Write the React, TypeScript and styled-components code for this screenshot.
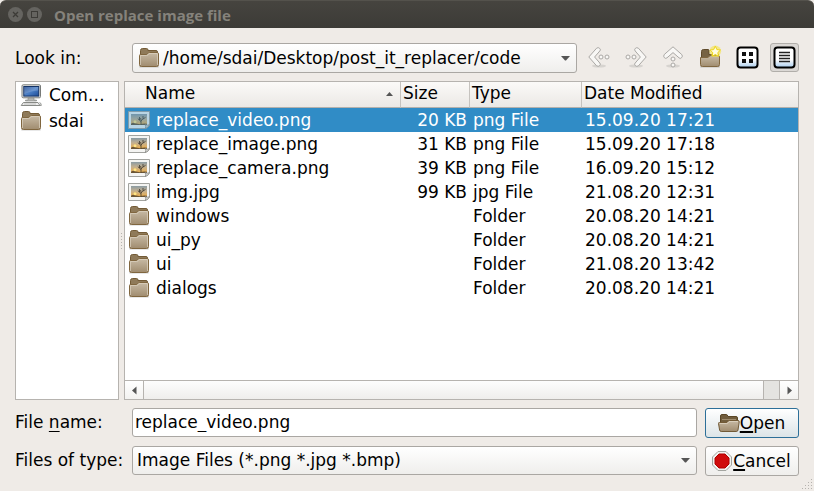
import React, { useState } from "react";
import styled, { createGlobalStyle } from "styled-components";

const GlobalStyle = createGlobalStyle`
  *, *::before, *::after { box-sizing: border-box; }
  body {
    margin: 0;
    background: #efebe7;
    color: #000;
    font: 17px/24px "DejaVu Sans", sans-serif;
  }
  button, input, select { font: inherit; color: inherit; margin: 0; }
`;

const line = "#b6b3af";

const Window = styled.div`
  display: flex;
  flex-direction: column;
  min-height: 100vh;
  background: #efebe7;
`;

const TitleBar = styled.header`
  display: flex;
  align-items: center;
  gap: 4px;
  height: 28px;
  padding-left: 8px;
  background: linear-gradient(#46443f, #3c3b37);
  border-top: 1px solid #54524c;
  border-radius: 6px 6px 0 0;
`;

const WindowButton = styled.button`
  display: flex;
  width: 15px;
  height: 15px;
  padding: 0;
  border: 0;
  border-radius: 50%;
  background: #656460;
`;

const Title = styled.h1`
  margin: 0 0 0 8px;
  color: #85827b;
  font: bold 15px/24px "Open Sans", sans-serif;
`;

const Dialog = styled.form`
  flex: 1;
  display: flex;
  flex-direction: column;
  gap: 8px;
  padding: 15px;
`;

const Row = styled.div`
  display: flex;
  gap: 8px;
  height: 30px;
`;

const Label = styled.label<{ $compact?: boolean }>`
  width: 109px;
  flex: none;
  line-height: ${(p) => (p.$compact ? 28 : 30)}px;
  white-space: nowrap;
`;

const Mnemonic = styled.span<{ $thick?: boolean }>`
  text-decoration: underline;
  text-decoration-thickness: ${(p) => (p.$thick ? 2 : 1)}px;
  text-underline-offset: ${(p) => (p.$thick ? 2 : 3)}px;
  text-decoration-skip-ink: none;
`;

const Combo = styled.div<{ $compact?: boolean }>`
  flex: 1;
  min-width: 0;
  height: ${(p) => (p.$compact ? 29 : 30)}px;
  display: grid;
  grid-template-columns: 30px 1fr 21px;
  align-items: center;
  border: 1px solid #aaa7a3;
  border-radius: 3px;
  background: linear-gradient(#fff, #efeeec);
`;

const Select = styled.select<{ $inset: number }>`
  grid-area: 1 / 1 / 2 / 4;
  align-self: start;
  width: 100%;
  height: ${(p) => (p.$inset > 10 ? 28 : 26)}px;
  padding: 0 22px 0 ${(p) => p.$inset}px;
  appearance: none;
  border: 0;
  background: transparent;
`;

const ComboIcon = styled.span`
  grid-area: 1 / 1;
  display: flex;
  padding-left: 5px;
  pointer-events: none;
`;

const ComboArrow = styled.span`
  grid-area: 1 / 3;
  display: flex;
  padding-left: 5px;
  pointer-events: none;
`;

const ToolButton = styled.button<{ $pressed?: boolean }>`
  flex: none;
  display: flex;
  align-items: center;
  justify-content: center;
  width: 29px;
  height: 29px;
  padding: 0 1px 1px 0;
  border: 1px solid ${(p) => (p.$pressed ? "#b1aeaa" : "transparent")};
  border-radius: 3px;
  background: ${(p) => (p.$pressed ? "#dbd8d5" : "transparent")};
`;

const Panels = styled.div`
  flex: 1;
  display: flex;
`;

const Places = styled.ul`
  width: 104px;
  flex: none;
  margin: 0;
  padding: 0 0 0 4px;
  list-style: none;
  background: #fff;
  border: 1px solid ${line};
`;

const Place = styled.li`
  display: flex;
  align-items: center;
  gap: 7px;
  height: 26px;
`;

const Splitter = styled.div`
  width: 5px;
  flex: none;
  display: flex;
  align-items: center;
  justify-content: center;
  cursor: col-resize;
`;

const FileView = styled.section`
  flex: 1;
  min-width: 0;
  display: flex;
  flex-direction: column;
  background: #fff;
  border: 1px solid ${line};
`;

const FileTable = styled.table`
  width: 100%;
  table-layout: fixed;
  border-collapse: separate;
  border-spacing: 0;
`;

const Column = styled.col<{ $width?: number }>`
  width: ${(p) => (p.$width ? `${p.$width}px` : "auto")};
`;

const HeadCell = styled.th<{ $first?: boolean }>`
  height: 26px;
  padding: 0 5px 1px ${(p) => (p.$first ? 20 : 2)}px;
  background: linear-gradient(#fbfaf8, #ebe8e5);
  border-right: 1px solid #c6c3bf;
  border-bottom: 1px solid #b3b0ac;
  font-weight: normal;
  text-align: left;
  vertical-align: top;
  line-height: 23px;
  &:last-child { border-right: 0; }
`;

const HeadContent = styled.div`
  display: flex;
  align-items: center;
  justify-content: space-between;
`;

const FileRow = styled.tr<{ $selected: boolean }>`
  background: ${(p) => (p.$selected ? "#308cc6" : "transparent")};
  color: ${(p) => (p.$selected ? "#fff" : "inherit")};
  svg { opacity: ${(p) => (p.$selected ? 0.7 : 1)}; }
`;

const Cell = styled.td<{ $right?: boolean }>`
  height: 24px;
  padding: 0 3px;
  text-align: ${(p) => (p.$right ? "right" : "left")};
  white-space: nowrap;
`;

const FileName = styled.div`
  display: flex;
  align-items: center;
  gap: 6px;
`;

const ScrollBar = styled.div`
  display: flex;
  height: 19px;
  margin-top: auto;
  border-top: 1px solid ${line};
  background: #e4e3e0;
`;

const ScrollButton = styled.button`
  width: 18px;
  display: flex;
  align-items: center;
  justify-content: center;
  padding: 0;
  border: 0;
  background: linear-gradient(#fff, #f3f2f0);
`;

const ScrollThumb = styled.div`
  flex: 1;
  margin-right: 15px;
  border: solid ${line};
  border-width: 0 1px;
  background: linear-gradient(#fdfdfd, #efeeec);
`;

const ScrollEnd = styled.div`
  display: flex;
  border-left: 1px solid ${line};
`;

const TextInput = styled.input`
  flex: 1;
  min-width: 0;
  height: 29px;
  padding: 0 2px 2px;
  border: 1px solid #aaa7a3;
  border-radius: 3px;
  background: #fff;
  outline: 0;
`;

const ActionButton = styled.button<{ $primary?: boolean }>`
  width: 94px;
  flex: none;
  display: flex;
  align-items: center;
  justify-content: center;
  padding: 0 2px 0 0;
  border: 1px solid ${(p) => (p.$primary ? "#2d6f98" : "#aaa7a3")};
  border-radius: 3px;
  background: ${(p) =>
    p.$primary ? "linear-gradient(#fff, #dce4e7)" : "linear-gradient(#fff, #efeeec)"};
`;

const Grip = styled.div`
  position: absolute;
  right: 1px;
  bottom: 1px;
  display: flex;
`;

const Frame = styled.div`
  position: relative;
`;

const Definitions = styled.svg`
  position: absolute;
  width: 0;
  height: 0;
`;

function Gradients() {
  return (
    <Definitions aria-hidden="true">
      <defs>
        <linearGradient id="folderFront" x1="0" y1="0" x2="0" y2="1">
          <stop offset="0" stopColor="#c8bba6" />
          <stop offset="1" stopColor="#a08c6f" />
        </linearGradient>
        <linearGradient id="screen" x1="0" y1="0" x2="1" y2="1">
          <stop offset="0" stopColor="#16408a" />
          <stop offset="0.5" stopColor="#4b7fc6" />
          <stop offset="1" stopColor="#1c4a95" />
        </linearGradient>
        <linearGradient id="sunset" x1="0" y1="0" x2="0" y2="1">
          <stop offset="0" stopColor="#8b9ba3" />
          <stop offset="0.45" stopColor="#c4b08f" />
          <stop offset="1" stopColor="#f0ae45" />
        </linearGradient>
        <linearGradient id="tile" x1="0" y1="0" x2="0" y2="1">
          <stop offset="0" stopColor="#fff" />
          <stop offset="0.6" stopColor="#fff" />
          <stop offset="1" stopColor="#a9cdee" />
        </linearGradient>
      </defs>
    </Definitions>
  );
}

function FolderIcon() {
  return (
    <svg width="22" height="22" viewBox="0 0 22 22" aria-hidden="true">
      <rect x="1" y="19" width="20" height="1.6" rx=".8" fill="#000" opacity=".18" />
      <path d="M2.5 12V3.5Q2.5 1.5 4.5 1.5H8.5Q10 1.5 10 3V3.5H18Q19.5 3.5 19.5 5V12Z" fill="#8f7a59" stroke="#735b36" />
      <path d="M1.5 8.5Q1.5 7.5 2.5 7.5H8Q9 7.5 9.6 6.6T11.3 5.5H19Q20.5 5.5 20.5 7V17.5Q20.5 19.5 18.5 19.5H3.5Q1.5 19.5 1.5 17.5Z" fill="url(#folderFront)" stroke="#80663f" />
      <path d="M2.5 18V8.5H8.5Q10 8.3 10.7 7.2T12 6.5H19.5V18" fill="none" stroke="#ddd3c2" opacity=".7" />
    </svg>
  );
}

function NewFolderIcon() {
  return (
    <svg width="24" height="24" viewBox="0 0 24 24" aria-hidden="true">
      <rect x="2" y="21" width="20" height="1.6" rx=".8" fill="#000" opacity=".2" />
      <path d="M3.5 13V6.5Q3.5 4.5 5.5 4.5H10Q11 4.5 11 5.5V9.5H20.5V13Z" fill="#766243" stroke="#5f4a2b" />
      <path d="M2.5 12.5H9.5Q10.4 12.5 11 11.5T13 10.5H20Q21.5 10.5 21.5 12V19.5Q21.5 21.5 19.5 21.5H4.5Q2.5 21.5 2.5 19.5Z" fill="url(#folderFront)" stroke="#80663f" />
      <circle cx="17.3" cy="6.3" r="5.8" fill="#f5e13d" opacity=".55" />
      <path d="M17.3 1.2 18.9 4.6 22.5 5 19.8 7.6 20.5 11.3 17.3 9.5 14.1 11.3 14.8 7.6 12.1 5 15.7 4.6Z" fill="#fffde4" stroke="#eed518" />
    </svg>
  );
}

function OpenFolderIcon() {
  return (
    <svg width="23" height="22" viewBox="0 0 23 22" aria-hidden="true">
      <path d="M3.5 14V4Q3.5 2.5 5 2.5H9.5Q10.5 2.5 10.8 4.5H19Q20.5 4.5 20.5 6V15Z" fill="#715d3d" stroke="#5b4726" />
      <path d="M5 7.5H19" stroke="#a08d6f" />
      <path d="M1.5 11.5Q1.3 10.5 2.5 10.5H9Q10.5 10.5 11 9.5T12.5 8.5H21Q22.4 8.5 22.2 10L21 18Q20.8 19.5 19.2 19.5H4.2Q2.9 19.5 2.6 18Z" fill="url(#folderFront)" stroke="#725a36" />
      <path d="M2.8 11.5H9.8Q11.3 11.3 12 9.5H21" fill="none" stroke="#e2d8c7" opacity=".7" />
    </svg>
  );
}

function ImageIcon() {
  return (
    <svg width="22" height="22" viewBox="0 0 22 22" aria-hidden="true">
      <path d="M.5 2.5H21.5V16L18 19.5H.5Z" fill="#f4f4f2" stroke="#a2a39f" />
      <rect x="3" y="5" width="16" height="11" fill="url(#sunset)" />
      <path d="M3 14.8Q5 13 8 14.5L12 15.2Q16 14 19 14.8V16H3Z" fill="#6b5535" />
      <circle cx="7" cy="12.7" r="1.5" fill="#ffe584" />
      <path d="M13 15.5V11.5M13 12.5 9.8 9.6M11.5 11V8M13 12 15 9.8V7M15 10 17.5 8.4M13 11 12.6 9" fill="none" stroke="#3a352c" strokeWidth=".8" />
      <path d="M17.3 19.5Q18.2 17.5 17.2 15.7Q19.5 16.6 21.5 15.7Q20.4 18.8 17.3 19.5Z" fill="#d5d6d2" stroke="#8b8c88" strokeWidth=".8" />
    </svg>
  );
}

function ComputerIcon() {
  return (
    <svg width="22" height="24" viewBox="0 0 22 24" aria-hidden="true">
      <rect x="2" y="1.8" width="18.5" height="13" rx="1.2" fill="#e9e9e6" stroke="#777a78" />
      <rect x="3.8" y="3.5" width="15" height="9.6" fill="url(#screen)" stroke="#143264" />
      <path d="M4 4H18V7.5Q10 8 4 11.5Z" fill="#fff" opacity=".18" />
      <path d="M8 15H14V17H16.5V18H5.5V17H8Z" fill="#b5b6b3" stroke="#858783" strokeWidth=".6" />
      <path d="M3.4 19.5H18L20 22.5H1.2Z" fill="#eee" stroke="#888a86" />
      <path d="M4.5 21H16.5" stroke="#91938f" strokeDasharray="1 1" />
      <path d="M19.5 19.5Q21.5 20 21.3 22.5H20" fill="#ddd" stroke="#888a86" strokeWidth=".8" />
    </svg>
  );
}

function ArrowIcon({ angle }: { angle: number }) {
  return (
    <svg width="24" height="24" viewBox="0 0 24 24" aria-hidden="true">
      <ellipse cx="12" cy="21" rx="7" ry="1.6" fill="#000" opacity=".1" />
      <g transform={`rotate(${angle} 12 12)`} fill="#f8f7f5" stroke="#aaa8a5">
        <path d="M1.8 12 9.6 3.2Q11.2 1.9 12.7 3.4T12.8 6L7.6 12 12.8 18Q14 19.3 12.7 20.6T9.6 20.8Z" strokeLinejoin="round" />
        <circle cx="14" cy="12" r="2" />
        <circle cx="20" cy="12" r="2" />
      </g>
    </svg>
  );
}

function TilesIcon() {
  return (
    <svg width="23" height="23" viewBox="0 0 23 23" aria-hidden="true">
      <rect x="1.5" y="1.5" width="20" height="20" rx="3" fill="url(#tile)" stroke="#000" strokeWidth="2" />
      <path d="M6 6h4v4H6ZM13 6h4v4h-4ZM6 13h4v4H6ZM13 13h4v4h-4Z" fill="#111" />
    </svg>
  );
}

function DetailsIcon() {
  return (
    <svg width="23" height="23" viewBox="0 0 23 23" aria-hidden="true">
      <rect x="1.5" y="1.5" width="20" height="20" rx="3" fill="url(#tile)" stroke="#000" strokeWidth="2" />
      <path d="M6 6.5H17M6 9.5H17M6 12.5H17M6 15.5H17" stroke="#222" strokeWidth="1.4" />
    </svg>
  );
}

function StopIcon() {
  return (
    <svg width="22" height="22" viewBox="0 0 22 22" aria-hidden="true">
      <path d="M7 1.5H15L20.5 7V15L15 20.5H7L1.5 15V7Z" fill="#f2f2ef" stroke="#a3a5a0" />
      <path d="M8 4H14L18 8V14L14 18H8L4 14V8Z" fill="#d00c0c" stroke="#b00000" />
    </svg>
  );
}

function Triangle({ direction }: { direction: "down" | "up" | "left" | "right" }) {
  const paths = {
    down: "M1 3H10L6 7.5H5Z",
    up: "M2 8H9L5.5 4Z",
    left: "M7.5 1.5V9.5L3 5.5Z",
    right: "M3.5 1.5V9.5L8 5.5Z",
  };
  return (
    <svg width="11" height="11" viewBox="0 0 11 11" aria-hidden="true">
      <path d={paths[direction]} fill="#555" />
    </svg>
  );
}

type Entry = { name: string; size?: string; type: string; modified: string };

const entries: Entry[] = [
  { name: "replace_video.png", size: "20 KB", type: "png File", modified: "15.09.20 17:21" },
  { name: "replace_image.png", size: "31 KB", type: "png File", modified: "15.09.20 17:18" },
  { name: "replace_camera.png", size: "39 KB", type: "png File", modified: "16.09.20 15:12" },
  { name: "img.jpg", size: "99 KB", type: "jpg File", modified: "21.08.20 12:31" },
  { name: "windows", type: "Folder", modified: "20.08.20 14:21" },
  { name: "ui_py", type: "Folder", modified: "20.08.20 14:21" },
  { name: "ui", type: "Folder", modified: "21.08.20 13:42" },
  { name: "dialogs", type: "Folder", modified: "20.08.20 14:21" },
];

export default function App() {
  const [selected, setSelected] = useState("replace_video.png");
  const [fileName, setFileName] = useState("replace_video.png");

  const choose = (entry: Entry) => {
    setSelected(entry.name);
    if (entry.size) setFileName(entry.name);
  };

  return (
    <Frame>
      <GlobalStyle />
      <Gradients />
      <Window>
        <TitleBar>
          <WindowButton type="button" aria-label="Close">
            <svg width="15" height="15" viewBox="0 0 15 15">
              <path d="M5 5 10 10M10 5 5 10" stroke="#3c3b37" strokeWidth="1.3" />
            </svg>
          </WindowButton>
          <WindowButton type="button" aria-label="Maximize">
            <svg width="15" height="15" viewBox="0 0 15 15">
              <rect x="4.5" y="4.5" width="6" height="6" fill="none" stroke="#3c3b37" />
            </svg>
          </WindowButton>
          <Title>Open replace image file</Title>
        </TitleBar>

        <Dialog onSubmit={(e) => e.preventDefault()}>
          <Row>
            <Label htmlFor="look-in">Look in:</Label>
            <Combo>
              <Select id="look-in" $inset={30}>
                <option>/home/sdai/Desktop/post_it_replacer/code</option>
              </Select>
              <ComboIcon><FolderIcon /></ComboIcon>
              <ComboArrow><Triangle direction="down" /></ComboArrow>
            </Combo>
            <ToolButton type="button" aria-label="Back"><ArrowIcon angle={0} /></ToolButton>
            <ToolButton type="button" aria-label="Forward"><ArrowIcon angle={180} /></ToolButton>
            <ToolButton type="button" aria-label="Parent directory"><ArrowIcon angle={90} /></ToolButton>
            <ToolButton type="button" aria-label="Create new folder"><NewFolderIcon /></ToolButton>
            <ToolButton type="button" aria-label="List view"><TilesIcon /></ToolButton>
            <ToolButton type="button" aria-label="Detail view" aria-pressed="true" $pressed><DetailsIcon /></ToolButton>
          </Row>

          <Panels>
            <Places>
              <Place><ComputerIcon />Com…</Place>
              <Place><FolderIcon />sdai</Place>
            </Places>
            <Splitter>
              <svg width="3" height="18" viewBox="0 0 3 18" aria-hidden="true">
                <path d="M1.5 1V18" stroke="#b5b2ae" strokeDasharray="1 2" />
              </svg>
            </Splitter>
            <FileView>
              <FileTable>
                <colgroup>
                  <Column $width={276} />
                  <Column $width={69} />
                  <Column $width={112} />
                  <Column />
                </colgroup>
                <thead>
                  <tr>
                    <HeadCell $first aria-sort="ascending">
                      <HeadContent>Name<Triangle direction="up" /></HeadContent>
                    </HeadCell>
                    <HeadCell>Size</HeadCell>
                    <HeadCell>Type</HeadCell>
                    <HeadCell>Date Modified</HeadCell>
                  </tr>
                </thead>
                <tbody>
                  {entries.map((entry) => (
                    <FileRow
                      key={entry.name}
                      $selected={entry.name === selected}
                      aria-selected={entry.name === selected}
                      onClick={() => choose(entry)}
                    >
                      <Cell>
                        <FileName>
                          {entry.size ? <ImageIcon /> : <FolderIcon />}
                          {entry.name}
                        </FileName>
                      </Cell>
                      <Cell $right>{entry.size}</Cell>
                      <Cell>{entry.type}</Cell>
                      <Cell>{entry.modified}</Cell>
                    </FileRow>
                  ))}
                </tbody>
              </FileTable>
              <ScrollBar>
                <ScrollButton type="button" aria-label="Scroll left"><Triangle direction="left" /></ScrollButton>
                <ScrollThumb />
                <ScrollEnd>
                  <ScrollButton type="button" aria-label="Scroll right"><Triangle direction="right" /></ScrollButton>
                </ScrollEnd>
              </ScrollBar>
            </FileView>
          </Panels>

          <Row>
            <Label htmlFor="file-name" $compact>File <Mnemonic>n</Mnemonic>ame:</Label>
            <TextInput id="file-name" value={fileName} onChange={(e) => setFileName(e.target.value)} />
            <ActionButton type="submit" $primary>
              <OpenFolderIcon />
              <span><Mnemonic $thick>O</Mnemonic>pen</span>
            </ActionButton>
          </Row>
          <Row>
            <Label htmlFor="file-type" $compact>Files of type:</Label>
            <Combo $compact>
              <Select id="file-type" $inset={4}>
                <option>Image Files (*.png *.jpg *.bmp)</option>
              </Select>
              <ComboArrow><Triangle direction="down" /></ComboArrow>
            </Combo>
            <ActionButton type="button">
              <StopIcon />
              <span><Mnemonic $thick>C</Mnemonic>ancel</span>
            </ActionButton>
          </Row>
        </Dialog>
      </Window>
      <Grip>
        <svg width="11" height="11" viewBox="0 0 11 11" aria-hidden="true">
          <path d="M9 0h1v1H9ZM6 3h1v1H6ZM9 3h1v1H9ZM3 6h1v1H3ZM6 6h1v1H6ZM9 6h1v1H9ZM0 9h1v1H0ZM3 9h1v1H3ZM6 9h1v1H6ZM9 9h1v1H9Z" fill="#b5b2ae" />
        </svg>
      </Grip>
    </Frame>
  );
}
